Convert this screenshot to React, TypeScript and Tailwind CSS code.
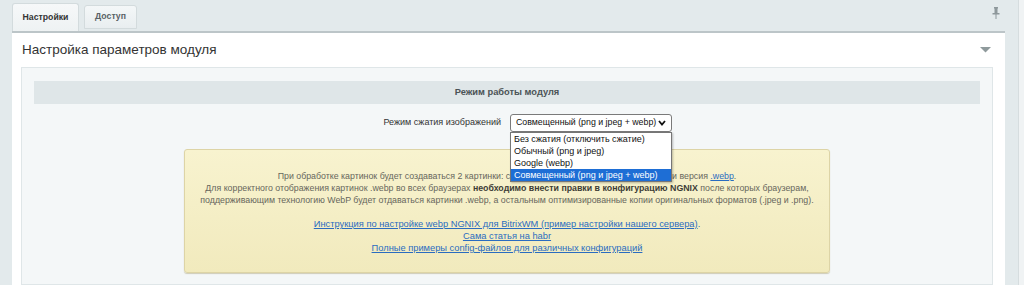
import React from 'react';

const options = [
  'Без сжатия (отключить сжатие)',
  'Обычный (png и jpeg)',
  'Google (webp)',
  'Совмещенный (png и jpeg + webp)',
];

const App: React.FC = () => {
  return (
    <div className="w-[1024px] h-[285px] overflow-hidden bg-[#e3eaec] flex font-['Liberation_Sans',Arial,sans-serif]">
      <div className="w-[1018px] pl-3 pr-[13px] flex flex-col">
        {/* Tabs */}
        <div className="h-[31px] flex items-end gap-[5px] relative">
          <div className="h-[28px] w-[67px] bg-gradient-to-b from-[#f6f8f9] to-[#eef2f3] border border-b-0 border-[#d3dbdd] rounded-t-[3px] flex items-center justify-center text-[8.7px] font-bold text-[#333]">
            Настройки
          </div>
          <div className="h-[24px] mb-[2px] w-[53px] bg-gradient-to-b from-[#f4f7f8] to-[#e9eef0] border border-[#d3dbdd] rounded-t-[3px] flex items-center justify-center text-[8.7px] font-bold text-[#5a6266]">
            Доступ
          </div>
          <svg className="absolute right-[5px] top-[7px]" width="8" height="13" viewBox="0 0 8 13">
            <rect x="2" y="0" width="4" height="1.5" fill="#8e989b" />
            <rect x="2.5" y="1" width="3" height="5" fill="#8e989b" />
            <rect x="0.5" y="6" width="7" height="1.5" fill="#8e989b" />
            <rect x="3.5" y="7" width="1" height="5" fill="#8e989b" />
          </svg>
        </div>

        {/* Panel */}
        <div className="flex-1 bg-white border-t-2 border-[#bcc5c8] flex flex-col">
          <div className="h-[34px] flex items-center justify-between pl-[10px] pr-[14px]">
            <span className="text-[13.5px] text-[#333]">Настройка параметров модуля</span>
            <svg width="11" height="6" viewBox="0 0 11 6">
              <polygon points="0,0 11,0 5.5,5.5" fill="#8f9a9c" />
            </svg>
          </div>
          <div className="flex-1 ml-[9px] mr-[12px] bg-[#f4f7f8] border border-[#dfe6e8] px-[12px] pt-[13px]">
            <div className="h-[23px] bg-[#dfe6e8] flex items-center justify-center text-[9.3px] font-bold text-[#4b5356]">
              Режим работы модуля
            </div>

            <div className="grid grid-cols-2 mt-[10px] h-[18px] items-center">
              <div className="text-right pr-[6px] text-[9px] text-[#333]">Режим сжатия изображений</div>
              <div className="pl-[3px] relative">
                <div className="w-[162px] h-[18px] border border-[#7a7a7a] rounded-[3px] bg-white flex items-center justify-between pl-[5px] pr-[5px] text-[8.8px] text-[#111]">
                  <span className="whitespace-nowrap">Совмещенный (png и jpeg + webp)</span>
                  <svg width="8" height="6" viewBox="0 0 8 6">
                    <polyline points="1,1 4,4.5 7,1" fill="none" stroke="#111" strokeWidth="1.8" />
                  </svg>
                </div>
                <div className="absolute z-10 left-[3px] top-[18px] w-[162px] border border-[#767676] bg-white text-[9px] leading-[12px] shadow-[1px_1px_2px_rgba(0,0,0,0.25)]">
                  {options.map((o, i) => (
                    <div
                      key={o}
                      className={`h-[12px] pl-[3px] whitespace-nowrap ${i === 3 ? 'bg-[#1e6ed5] text-white' : 'text-[#111]'}`}
                    >
                      {o}
                    </div>
                  ))}
                </div>
              </div>
            </div>

            <div className="mt-[17px] mx-auto w-[646px] h-[124px] rounded-[3px] border border-[#ddd4a6] bg-gradient-to-b from-[#f8f3cf] to-[#f1eabd] shadow-[0_1px_1px_rgba(150,140,90,0.4)] pt-[20px] text-center text-[8.8px] leading-[12px] text-[#66665c] whitespace-nowrap">
              <div>
                При обработке картинок будет создаваться 2 картинки: сжатая копия оригинала (.png или .jpeg) и версия{' '}
                <a className="text-[#2a6cc0] underline">.webp</a>.
              </div>
              <div>
                Для корректного отображения картинок .webp во всех браузерах{' '}
                <b className="text-[#3d3d36]">необходимо внести правки в конфигурацию NGNIX</b> после которых браузерам,
              </div>
              <div>
                поддерживающим технологию WebP будет отдаваться картинки .webp, а остальным оптимизированные копии оригинальных форматов (.jpeg и .png).
              </div>
              <div className="mt-[12px] text-[9.3px] text-[#2a6cc0]">
                <div>
                  <a className="underline">Инструкция по настройке webp NGNIX для BitrixWM (пример настройки нашего сервера)</a>.
                </div>
                <div><a className="underline">Сама статья на habr</a></div>
                <div><a className="underline">Полные примеры config-файлов для различных конфигураций</a></div>
              </div>
            </div>
          </div>
        </div>
      </div>
      <div className="w-[6px] bg-[#f0f3f4] border-l border-[#d6dddf]" />
    </div>
  );
};

export default App;
